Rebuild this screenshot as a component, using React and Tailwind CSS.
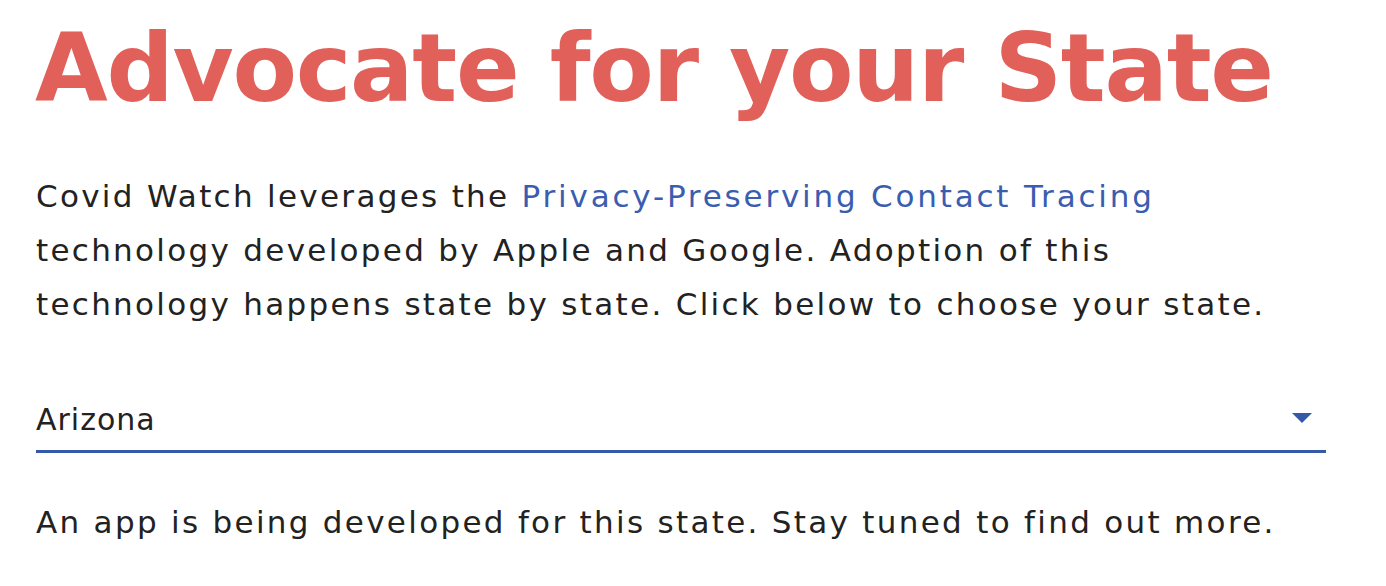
export default function App() {
  return (
    <div className="bg-white w-[1386px] h-[586px] overflow-hidden" style={{ fontFamily: '"DejaVu Sans", sans-serif' }}>
      <div className="ml-[36px] w-[1290px] pt-[9px]">
        <h1 className="text-[94px] leading-[120px] font-bold text-[#e1605a] whitespace-nowrap tracking-[-1.3px] ml-[-1px]">
          Advocate for your State
        </h1>
        <p className="mt-[40px] text-[31px] leading-[54px] text-[#222222] whitespace-nowrap tracking-[2.3px]">
          Covid Watch leverages the{' '}
          <a href="#" className="text-[#3a5daf] tracking-[2.8px]">Privacy-Preserving Contact Tracing</a>
          <br />
          technology developed by Apple and Google. Adoption of this
          <br />
          technology happens state by state. Click below to choose your state.
        </p>
        <div className="mt-[69px] flex items-center justify-between border-b-[3px] border-[#3559a9] pb-[10px]">
          <span className="text-[30px] leading-[40px] text-[#222222] tracking-[1px]">Arizona</span>
          <svg width="20" height="10" viewBox="0 0 20 10" className="mr-[14px] mt-[-4px]">
            <path d="M0 0 L20 0 L10 10 Z" fill="#3559a9" />
          </svg>
        </div>
        <p className="mt-[42px] text-[31px] leading-[54px] text-[#222222] whitespace-nowrap tracking-[2.3px]">
          An app is being developed for this state. Stay tuned to find out more.
        </p>
      </div>
    </div>
  );
}
